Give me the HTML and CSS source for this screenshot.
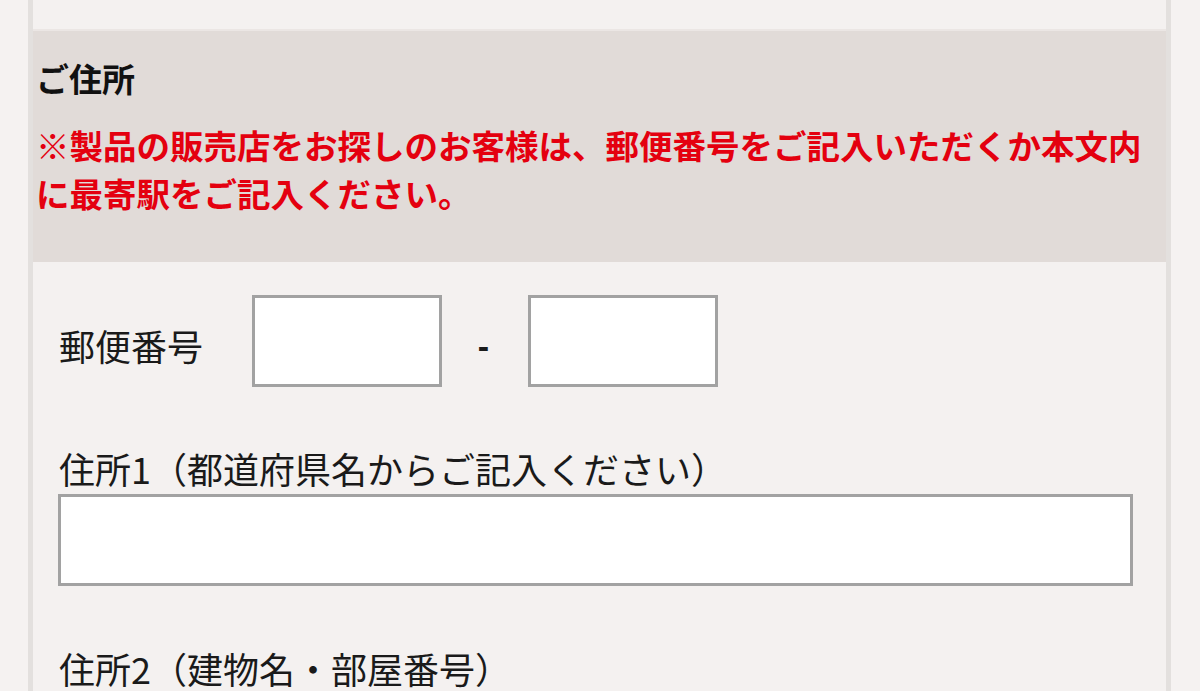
FILE: index.html
```html
<!DOCTYPE html>
<html lang="ja">
<head>
<meta charset="utf-8">
<title>ご住所</title>
<link rel="stylesheet" href="styles.css">
</head>
<body>
<div class="card">
  <div class="prev"></div>
  <div class="head">
    <h2 class="title">ご住所</h2>
    <p class="note">※製品の販売店をお探しのお客様は、郵便番号をご記入いただくか本文内に最寄駅をご記入ください。</p>
  </div>
  <div class="form">
    <div class="zip-row">
      <span class="zip-label">郵便番号</span>
      <input class="box zip" type="text">
      <span class="dash">-</span>
      <input class="box zip" type="text">
    </div>
    <label class="label">住所1（都道府県名からご記入ください）</label>
    <input class="box wide" type="text">
    <label class="label second">住所2（建物名・部屋番号）</label>
  </div>
</div>
</body>
</html>
```

FILE: styles.css
```css
html, body {
  margin: 0;
  padding: 0;
  background: #f5f2f1;
  font-family: "Noto Sans CJK JP", "Noto Sans", sans-serif;
  color: #1a1a1a;
  overflow: hidden;
}

.card {
  margin-left: 28px;
  width: 1133px;
  border-left: 5px solid #e3e0de;
  border-right: 5px solid #e3e0de;
  background: #f4f1f0;
  min-height: 691px;
}

.prev {
  height: 29px;
  border-bottom: 2px solid #ebe6e4;
  background: #f4f1f0;
}

.head {
  background: #e1dbd8;
  padding: 23px 20px 45px 3px;
}

.title {
  margin: 0;
  font-size: 33px;
  font-weight: 700;
  line-height: 48px;
  color: #111;
}

.note {
  margin: 19px 0 0;
  font-size: 33.5px;
  font-weight: 700;
  line-height: 48px;
  color: #e4000f;
}

.form {
  padding: 33px 33px 0 26px;
  display: flex;
  flex-direction: column;
  align-items: flex-start;
}

.zip-row {
  display: flex;
  align-items: center;
  height: 92px;
}

.zip-label {
  width: 193px;
  font-size: 36px;
  line-height: 48px;
  padding-top: 8px;
}

.box {
  box-sizing: border-box;
  height: 92px;
  border: 3px solid #a2a2a2;
  background: #ffffff;
  margin: 0;
  padding: 0 10px;
  font-size: 30px;
  outline: none;
}

.zip {
  width: 190px;
}

.dash {
  width: 86px;
  text-align: center;
  font-family: "Liberation Sans", sans-serif;
  font-size: 34px;
  font-weight: 700;
  padding-top: 10px;
  padding-right: 3px;
  box-sizing: border-box;
}

.label {
  display: block;
  margin-top: 57px;
  font-size: 36px;
  line-height: 48px;
  margin-bottom: 2px;
}

.label.second {
  margin-top: 58px;
}

.wide {
  width: 1075px;
  margin-left: -1px;
}
```
